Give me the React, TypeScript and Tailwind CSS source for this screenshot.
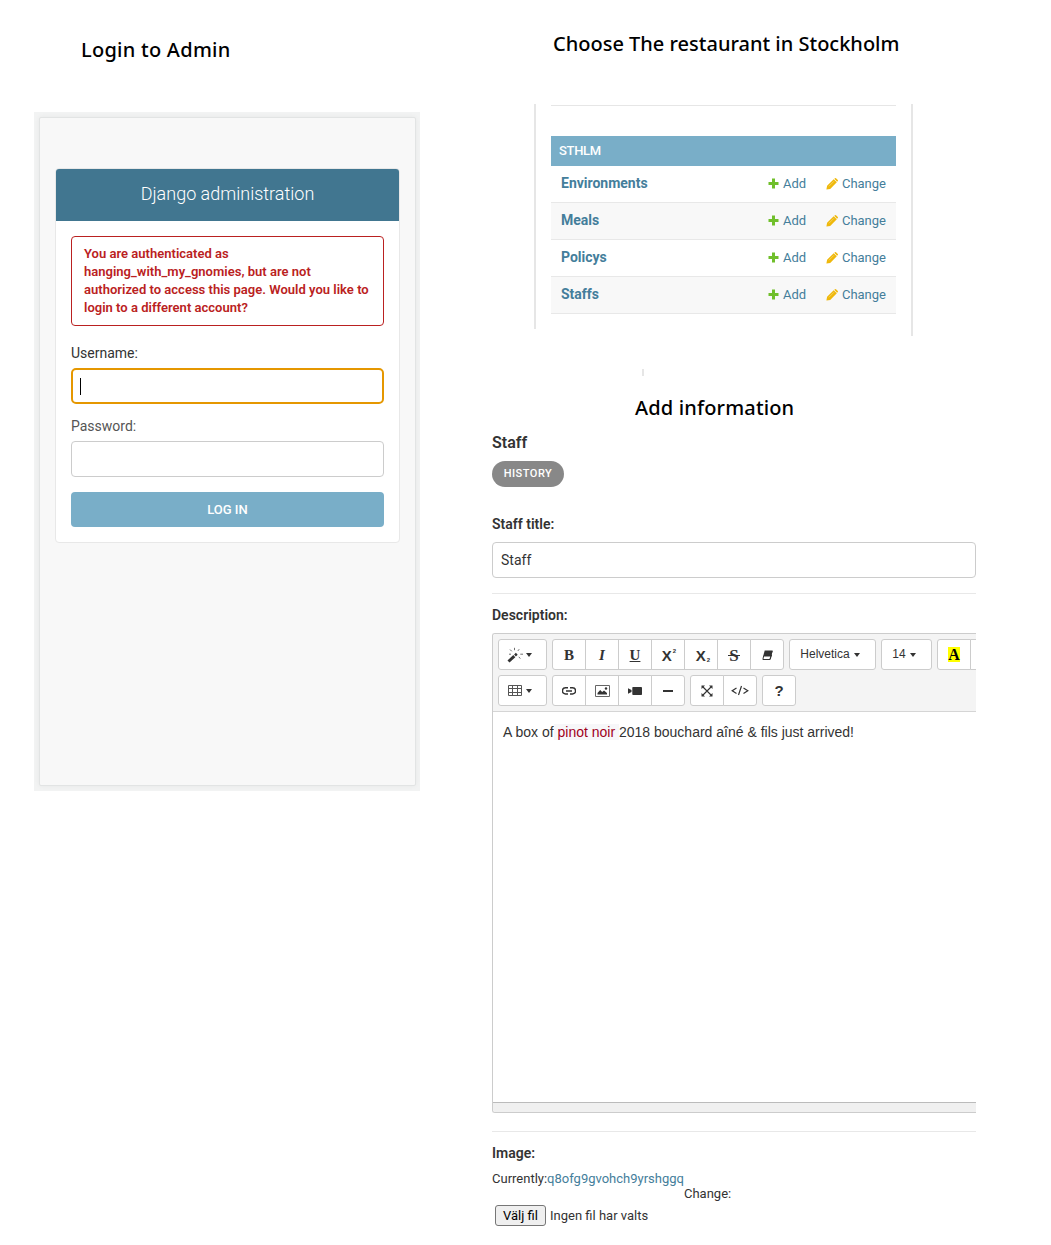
import React from "react";

const roboto = "font-[Roboto,sans-serif]";
const arial = "font-['Liberation_Sans',Arial,sans-serif]";
const serif = "font-['Liberation_Serif',serif]";
const title = "font-['Noto_Sans',sans-serif] font-medium text-black whitespace-nowrap text-[20px] leading-[28px]";

function Plus() {
  return (
    <svg width="11" height="11" viewBox="0 0 11 11" className="relative -top-px shrink-0">
      <path d="M4 .5h3v3.500h3.500v3H7v3.500H4V7H.5V4H4z" fill="#70bf2b" />
    </svg>
  );
}

function Pencil() {
  return (
    <svg width="12" height="12" viewBox="0 0 12 12" className="shrink-0">
      <path d="M.4 11.600l.7-3.800L7.700 1.200l3.100 3.100-6.600 6.600zM8.300 .8l.7-.6q.5-.4 1 0l1.800 1.800q.4.5 0 1l-.7.700z" fill="#efb80b" />
      <path d="M2.900 8.300l5-5" stroke="#fff" strokeWidth=".6" strokeOpacity=".55" fill="none" />
    </svg>
  );
}

function Caret() {
  return <svg width="6" height="4" viewBox="0 0 6 4" className="shrink-0"><path d="M0 0h6L3 4z" fill="#333" /></svg>;
}

function Login() {
  return (
    <section className="w-[386px]">
      <h2 className={`${title} ml-[47px] tracking-[0.26px]`}>Login to Admin</h2>
      <div className="mt-[48px] h-[679px] bg-[#f2f3f3] px-[5px] pt-[5px]">
        <div className={`h-[669px] w-[377px] rounded-[2px] border border-[#e2e4e4] bg-[#f8f8f8] px-[15px] pt-[50px] shadow-[0_0_5px_rgba(0,0,0,0.05)] ${roboto}`}>
          <div className="h-[375px] overflow-hidden rounded-[4px] border border-[#e8e8e8] bg-white">
            <div className="flex h-[52px] items-center justify-center bg-[#417690] text-[18px] font-light text-white">
              <span className="relative -top-[2px]">Django administration</span>
            </div>
            <div className="flex flex-col px-[15px] pt-[15px] text-[14px] text-[#444]">
              <p className="h-[90px] rounded-[4px] border border-[#ba2121] px-[12px] pt-[8px] text-[13px] leading-[18px] font-semibold tracking-[0.015px] whitespace-nowrap text-[#ba2121]">
                You are authenticated as<br />hanging_with_my_gnomies, but are not<br />authorized to access this page. Would you like to<br />login to a different account?
              </p>
              <label className="mt-[17px] h-[20px] leading-[20px] text-[#333]">Username:</label>
              <div className="mt-[5px] flex h-[36px] items-center rounded-[5px] border-2 border-[#e59700] pl-[7px]">
                <span className="h-[17px] w-px bg-black" />
              </div>
              <label className="mt-[12px] h-[20px] leading-[20px] text-[#555]">Password:</label>
              <div className="mt-[5px] h-[36px] rounded-[4px] border border-[#ccc]" />
              <button className="mt-[15px] h-[35px] rounded-[4px] bg-[#79aec8] text-[13px] font-medium text-white">LOG IN</button>
            </div>
          </div>
        </div>
      </div>
    </section>
  );
}

function Models() {
  return (
    <div className="flex">
      <div className="h-[225px] w-[2px] bg-[#e6e6e6]" />
      <div className={`mx-[15px] mt-px w-[345px] border-t border-[#e6e6e6] text-[13px] text-[#447e9b] ${roboto}`}>
        <div className="mt-[30px] flex h-[30px] items-center bg-[#79aec8] pl-[8px] text-[13px] font-medium tracking-[-0.3px] text-white">STHLM</div>
        {["Environments", "Meals", "Policys", "Staffs"].map((name, i) => (
          <div key={name} className={`flex h-[37px] items-center border-b border-[#e8e8e8] pr-[10px] pl-[10px] ${i % 2 ? "bg-[#f8f8f8]" : "bg-white"}`}>
            <span className="relative -top-px grow text-[14px] font-bold">{name}</span>
            <Plus /><span className="ml-[4px] w-[43px]">Add</span>
            <Pencil /><span className="ml-[4px]">Change</span>
          </div>
        ))}
      </div>
      <div className="h-[232px] w-[2px] bg-[#e6e6e6]" />
    </div>
  );
}

function Group({ items, widths }: { items: React.ReactNode[]; widths?: string }) {
  return (
    <div className="mr-[5px] flex shrink-0 pl-px">
      {items.map((it, i) => (
        <span key={i} className={`-ml-px flex h-[31px] ${widths ?? "w-[34px]"} shrink-0 items-center justify-center gap-[4px] border border-[#ccc] bg-white first:rounded-l-[3px] last:rounded-r-[3px]`}>
          {it}
        </span>
      ))}
    </div>
  );
}

const glyph = `${serif} relative top-px text-[15px] font-bold leading-none`;

const wand = (
  <svg width="17" height="16" viewBox="0 0 17 16" fill="none" stroke="#333">
    <path d="M1.500 14.500L7.300 9.200" strokeWidth="3" /><path d="M8 8.500L9.800 6.800" strokeWidth="2.600" />
    <path d="M3 2.500l1.800 1.800M7.500 .8v2.400M12.200 2.200L10.900 3.900M13.300 7.200H16M11.800 9.800l1.500 1.800M2 7.200h2" strokeWidth="1" strokeOpacity=".7" />
  </svg>
);
const eraser = (
  <svg width="11" height="11" viewBox="0 0 11 11" className="relative top-px"><path d="M2.700 .5h8L9.200 6H1.200z" fill="#333" /><path d="M1.600 6h7.200l-.8 3.500H.9zM8.800 6l1.400-5M8 9.500L9.600 5" fill="#fff" stroke="#333" /></svg>
);
const table = (
  <svg width="14" height="12" viewBox="0 0 14 12" fill="none" stroke="#555"><path d="M.5.5h13v10H.5zM.5 3.500h13M.5 7.500h13M4.500.5v10M9.500.5v10" /></svg>
);
const link = (
  <svg width="14" height="8" viewBox="0 0 14 8" fill="none" stroke="#333" strokeWidth="1.500"><path d="M6 .8H3.500a3.100 3.100 0 000 6.200H6M8 .8h2.500a3.100 3.100 0 010 6.200H8M4 4h6" /></svg>
);
const image = (
  <svg width="15" height="12" viewBox="0 0 15 12"><path d="M.5.5h14v11H.5z" fill="none" stroke="#666" /><path d="M2.500 9.500V8l2.700-3 2 2L9 5.500l3 2.500v1.500z" fill="#333" /><circle cx="11" cy="3.500" r="1.200" fill="#333" /></svg>
);
const video = (
  <svg width="14" height="8" viewBox="0 0 14 8" fill="#333"><path d="M0 1.200l3.500 1.800v2L0 6.800z" /><rect x="4.300" y="0" width="9.700" height="8" rx=".8" /></svg>
);
const expand = (
  <svg width="12" height="12" viewBox="0 0 12 12"><path d="M2 2l8 8M10 2l-8 8" stroke="#333" strokeWidth="1.100" /><path d="M.5.5H4L.5 4zM11.500.5V4L8 .5zM.5 11.500V8L4 11.500zM11.500 11.500H8L11.500 8z" fill="#333" /></svg>
);
const code = (
  <svg width="18" height="11" viewBox="0 0 18 11" fill="none" stroke="#333" strokeWidth="1.200"><path d="M5.500 3L1.200 5.700l4.300 2.700M12.500 3l4.300 2.700-4.300 2.700M10.500 1L7.500 10" /></svg>
);

function Editor() {
  return (
    <div className="h-[480px] w-[484px] overflow-hidden rounded-l-[3px] border border-r-0 border-[#ccc] text-[#333]">
      <div className={`h-[78px] border-b border-[#d5d5d5] bg-[#f4f4f4] pt-[5px] pl-[5px] text-[12px] ${arial}`}>
        <div className="flex">
          <Group widths="w-[49px] pr-[7px]" items={[<>{wand}<span className="-ml-[2px] flex"><Caret /></span></>]} />
          <Group
            items={[
              <b className={glyph}>B</b>,
              <i className={glyph}>I</i>,
              <span className={`${glyph} underline underline-offset-1`}>U</span>,
              <span className="relative top-px left-px flex text-[15px] leading-none font-bold">X<span className="-mt-px ml-px text-[6px] leading-[8px]">2</span></span>,
              <span className="relative top-px left-[2px] flex items-end text-[15px] leading-none font-bold">X<span className="-mb-px ml-px text-[6px] leading-[8px]">2</span></span>,
              <span className={`${glyph} flex items-center text-[17px]`}>S<span className="absolute -left-px top-[8px] h-px w-[12px] bg-[#333]" /></span>,
              eraser,
            ]}
          />
          <Group widths="w-[87px] pr-[5px]" items={[<><span className="relative -top-px">Helvetica</span><Caret /></>]} />
          <Group widths="w-[51px] pr-[5px]" items={[<><span className="relative -top-px">14</span><Caret /></>]} />
          <Group items={[<span className={`${serif} relative flex h-[15px] w-[12px] items-center justify-center bg-[#ff0] pt-px text-[16px] leading-none font-bold text-black`}>A</span>, null]} />
        </div>
        <div className="mt-[5px] flex">
          <Group widths="w-[49px] pr-[6px]" items={[<>{table}<Caret /></>]} />
          <Group items={[link, image, video, <span className="h-[2px] w-[10px] bg-[#333]" />]} />
          <Group items={[expand, code]} />
          <Group items={[<b className="relative top-px text-[15px]">?</b>]} />
        </div>
      </div>
      <div className={`h-[390px] pt-[10px] pl-[10px] text-[14px] leading-[20px] whitespace-nowrap ${arial}`}>
        A box of<span className="bg-[#f7f7f9] text-[#a0001c]"> pinot noir </span>2018 bouchard aîné &amp; fils just arrived!
      </div>
      <div className="h-[10px] border-t border-[#bbb] bg-[#f0f0f0]" />
    </div>
  );
}

function StaffForm() {
  return (
    <div className={`w-[484px] text-[#333] ${roboto}`}>
      <h3 className="h-[20px] pt-px text-[16px] leading-[20px] font-semibold">Staff</h3>
      <span className="mt-[9px] flex h-[26px] w-[72px] items-center justify-center rounded-full bg-[#888] text-[11px] font-medium tracking-[0.5px] text-white"><span className="relative top-[0.5px]">HISTORY</span></span>
      <label className="mt-[27px] block h-[20px] text-[14px] leading-[20px] font-semibold">Staff title:</label>
      <div className="mt-[8px] flex h-[36px] items-center rounded-[4px] border border-[#ccc] pl-[8px] text-[14px]">Staff</div>
      <div className="mt-[15px] border-t border-[#e8e8e8]" />
      <label className="mt-[11px] mb-[8px] block h-[20px] text-[14px] leading-[20px] font-semibold">Description:</label>
      <Editor />
      <div className="mt-[18px] border-t border-[#e8e8e8]" />
      <label className="mt-[11px] block h-[20px] text-[14px] leading-[20px] font-semibold">Image:</label>
      <div className="mt-[8px] flex h-[30px] text-[13px] leading-[15px]">
        <span>Currently:</span><span className="text-[#447e9b]">q8ofg9gvohch9yrshggq</span><span className="self-end">Change:</span>
      </div>
      <div className="mt-[4px] flex h-[21px] items-center pl-[3px] text-[13px]">
        <button className="mr-[4px] h-[21px] w-[51px] rounded-[3px] border border-[#767676] bg-[#efefef] text-[13px] leading-none text-black">Välj fil</button>
        Ingen fil har valts
      </div>
    </div>
  );
}

export default function App() {
  return (
    <main className="flex h-[1245px] w-[1051px] overflow-hidden bg-white pl-[34px]">
      <div className="pt-[36px]"><Login /></div>
      <div className="ml-[72px] pt-[30px]">
        <h2 className={`${title} ml-[61px]`}>Choose The restaurant in Stockholm</h2>
        <div className="mt-[46px] ml-[42px]"><Models /></div>
        <div className="mt-[33px] ml-[150px] h-[7px] w-[2px] bg-[#e6e6e6]" />
        <h2 className={`${title} mt-[18px] ml-[143px] tracking-[0.15px]`}>Add information</h2>
        <div className="mt-[10px]"><StaffForm /></div>
      </div>
    </main>
  );
}
